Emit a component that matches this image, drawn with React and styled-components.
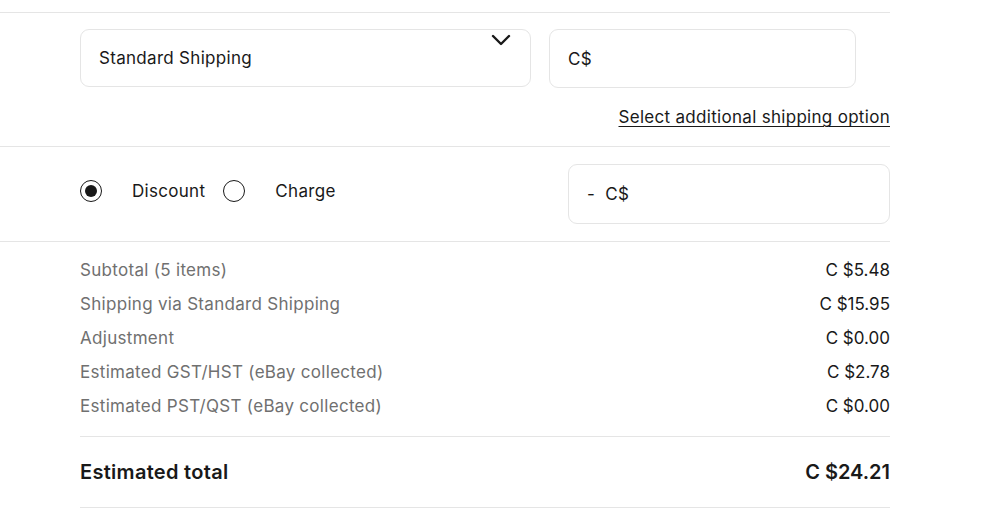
import React, { useState } from 'react'
import styled, { createGlobalStyle } from 'styled-components';

const GlobalStyle = createGlobalStyle`
  body {
    margin: 0;
    background: #fff;
    font-family: Inter, "Open Sans", Arial, sans-serif;
    color: #191919;
    letter-spacing: 0.3px;
  }
`

const Page = styled.div`
  width: 890px;
`

const TopRule = styled.div`
  height: 12px;
  border-bottom: 1px solid #e5e5e5;
`

const Section = styled.section`
  padding: ${props => props.pad};
  margin-left: ${props => props.indent ? '80px' : '0'};
  border-bottom: 1px solid #e5e5e5;
`

const FieldRow = styled.div`
  display: flex;
  gap: 18px;
  padding-left: 80px;
`

const Box = styled.div`
  box-sizing: border-box;
  display: flex;
  align-items: center;
  width: ${props => props.w}px;
  height: ${props => props.h}px;
  padding: 0 18px;
  border: 1px solid #e5e5e5;
  border-radius: 9px;
  font-size: 17px;
`

const SelectBox = styled(Box)`
  justify-content: space-between;
  align-items: flex-start;
  padding-right: 19px;
  & span {
    align-self: center;
  }
  & svg {
    margin-top: 4px;
  }
`

const LinkRow = styled.div`
  margin-top: 19px;
  text-align: right;
`

const Link = styled.a`
  font-size: 17px;
  line-height: 20px;
  color: #191919;
  text-decoration: underline;
  text-underline-offset: 3px;
  text-decoration-thickness: 1px;
  cursor: pointer;
`

const AdjustRow = styled.div`
  display: flex;
  justify-content: space-between;
  align-items: flex-start;
  padding-left: 80px;
`

const RadioGroup = styled.div`
  display: flex;
  align-items: center;
  margin-top: 16px;
`

const RadioLabel = styled.label`
  display: flex;
  align-items: center;
  gap: 30px;
  margin-right: 18px;
  font-size: 17px;
  cursor: pointer;
`

const Circle = styled.span`
  box-sizing: border-box;
  width: 22px;
  height: 22px;
  border: 1.5px solid #191919;
  border-radius: 50%;
  display: flex;
  align-items: center;
  justify-content: center;
  &::after {
    content: '';
    width: 12px;
    height: 12px;
    border-radius: 50%;
    background: #191919;
    display: ${props => props.checked ? 'block' : 'none'};
  }
`

const SummaryRow = styled.div`
  display: flex;
  justify-content: space-between;
  align-items: center;
  height: 34px;
  font-size: 17px;
  & span:first-child {
    color: #707070;
  }
  & span:last-child {
    letter-spacing: 0;
  }
`

const TotalRow = styled.div`
  display: flex;
  justify-content: space-between;
  align-items: center;
  height: 70px;
  font-size: 20px;
  font-weight: 600;
  & span:last-child {
    letter-spacing: 0;
  }
`

const Chevron = () => (
  <svg width="20" height="12" viewBox="0 0 20 12" fill="none">
    <path d="M2 2 L10 10 L18 2" stroke="#191919" strokeWidth="2.4" strokeLinecap="round" strokeLinejoin="round" />
  </svg>
)

const lines = [
  ['Subtotal (5 items)', 'C $5.48'],
  ['Shipping via Standard Shipping', 'C $15.95'],
  ['Adjustment', 'C $0.00'],
  ['Estimated GST/HST (eBay collected)', 'C $2.78'],
  ['Estimated PST/QST (eBay collected)', 'C $0.00'],
]

const App = () => {
  const [mode, setMode] = useState('discount');

  return (
    <Page>
      <GlobalStyle />
      <TopRule />
      <Section pad="16px 0 19px">
        <FieldRow>
          <SelectBox w={451} h={58}>
            <span>Standard Shipping</span>
            <Chevron />
          </SelectBox>
          <Box w={307} h={59}>C$</Box>
        </FieldRow>
        <LinkRow>
          <Link>Select additional shipping option</Link>
        </LinkRow>
      </Section>
      <Section pad="17px 0 17px">
        <AdjustRow>
          <RadioGroup>
            <RadioLabel onClick={() => setMode('discount')}>
              <Circle checked={mode === 'discount'} />
              Discount
            </RadioLabel>
            <RadioLabel onClick={() => setMode('charge')}>
              <Circle checked={mode === 'charge'} />
              Charge
            </RadioLabel>
          </RadioGroup>
          <Box w={322} h={60}>-&nbsp; C$</Box>
        </AdjustRow>
      </Section>
      <Section indent pad="11px 0 13px">
        {lines.map(([label, value]) => (
          <SummaryRow key={label}>
            <span>{label}</span>
            <span>{value}</span>
          </SummaryRow>
        ))}
      </Section>
      <Section indent pad="0">
        <TotalRow>
          <span>Estimated total</span>
          <span>C $24.21</span>
        </TotalRow>
      </Section>
    </Page>
  )
}

export default App;
